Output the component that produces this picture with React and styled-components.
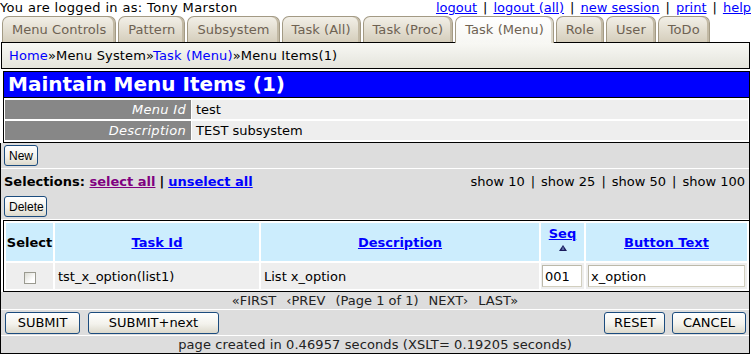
import React from 'react'
import styled, {createGlobalStyle, css} from 'styled-components'

const GlobalStyle = createGlobalStyle`
  body {
    margin: 0;
    background: #fff;
    font-family: "DejaVu Sans", Verdana, sans-serif;
    font-size: 13px;
    color: #000;
  }
`

const Page = styled.div`
  width: 752px;
  overflow: hidden;
`

const TopLine = styled.div`
  display: flex;
  justify-content: space-between;
  height: 16px;
  line-height: 15px;
  white-space: nowrap;
`

const Who = styled.span`
  letter-spacing: 0.35px;
`

const LinkRow = styled.div`
  display: flex;
  margin-right: 1px;
  a { color: #0000ff; text-decoration: underline; }
`

const Sep = styled.span`
  margin: 0 ${p => p.gap || 6}px;
  font-weight: ${p => p.bold ? 'bold' : 'normal'};
`

const TabBar = styled.ul`
  display: flex;
  align-items: flex-start;
  gap: 2px;
  height: 26px;
  margin: 0;
  padding: 0 0 0 2px;
  list-style: none;
  position: relative;
  z-index: 1;
`

const Tab = styled.li`
  box-sizing: border-box;
  height: 26px;
  padding: 0 9px;
  line-height: 25px;
  letter-spacing: 0.05px;
  border: 1px solid #a39a84;
  border-bottom: none;
  border-radius: 7px 7px 0 0;
  background: linear-gradient(#f2efe7, #d5cebc);
  box-shadow: inset -2px 0 0 #c2b9a4;
  color: #6e6253;
  white-space: nowrap;
  ${p => p.active && css`
    height: 27px;
    margin-bottom: -1px;
    background: linear-gradient(#ffffff, #f7f7f3);
    box-shadow: inset -2px 0 0 #dcd8cc;
  `}
`

const Crumbs = styled.div`
  box-sizing: border-box;
  width: 749px;
  height: 27px;
  margin-left: 1px;
  padding-left: 7px;
  line-height: 25px;
  letter-spacing: 0.15px;
  border: 1px solid #000;
  background: linear-gradient(#f8f8f4, #e4e4dc);
  white-space: nowrap;
  a { color: #0000ff; text-decoration: none; }
`

const MainBox = styled.div`
  box-sizing: border-box;
  width: 747px;
  margin: 2px 0 0 3px;
  border: 1px solid #000;
`

const Title = styled.h1`
  margin: 0;
  height: 25px;
  padding-left: 4px;
  line-height: 25px;
  background: #0000ff;
  color: #fff;
  font-size: 20px;
  font-weight: bold;
  border-bottom: 1px solid #000;
  white-space: nowrap;
`

const FieldTable = styled.table`
  width: 100%;
  border-spacing: 1px 2px;
  table-layout: fixed;
`

const Label = styled.td`
  box-sizing: border-box;
  width: 186px;
  height: 19px;
  padding: 0 5px 0 0;
  background: #878787;
  color: #fff;
  font-style: italic;
  letter-spacing: 0.3px;
  text-align: right;
`

const Value = styled.td`
  height: 19px;
  padding: 0 4px;
  background: #eeeeee;
`

const Lower = styled.div`
  box-sizing: border-box;
  width: 750px;
  border: 1px solid #000;
  border-top: none;
`

const Bar = styled.div`
  background: #dddddd;
  border-bottom: ${p => p.last ? 'none' : '1px solid #fff'};
  padding: ${p => p.pad || '0 3px'};
  height: ${p => p.h}px;
  box-sizing: content-box;
`

const SelectLine = styled.div`
  display: flex;
  justify-content: space-between;
  line-height: 16px;
  white-space: nowrap;
  margin-bottom: 6px;
`

const Strong = styled.span`
  font-weight: bold;
`

const SelLink = styled.a`
  color: ${p => p.visited ? '#800080' : '#0000ff'};
  text-decoration: underline;
`

const ShowRow = styled.div`
  display: flex;
  padding-right: 1px;
`

const Button = styled.button`
  box-sizing: border-box;
  height: ${p => p.small ? 21 : 22}px;
  width: ${p => p.w ? `${p.w}px` : 'auto'};
  padding: 0 ${p => p.small ? 4 : 9}px;
  font-family: ${p => p.small ? '"Liberation Sans", Arial, sans-serif' : '"DejaVu Sans", Verdana, sans-serif'};
  font-size: ${p => p.small ? 12 : 13}px;
  color: #000;
  border: 1px solid #1c4c7e;
  border-radius: 3px;
  background: linear-gradient(#ffffff, #f3f2ec 55%, #dcd9cc);
  cursor: pointer;
`

const DataWrap = styled.div`
  margin-left: 2px;
  border-top: 1px solid #000;
  border-left: 1px solid #000;
  border-bottom: 1px solid #000;
`

const DataTable = styled.table`
  width: 100%;
  border-spacing: 2px;
  table-layout: fixed;
`

const Th = styled.th`
  height: 38px;
  padding: 0;
  background: #ccedfd;
  font-weight: bold;
  text-align: center;
  vertical-align: middle;
  a { color: #0000ff; text-decoration: underline; }
`

const SortCell = styled.div`
  display: flex;
  flex-direction: column;
  align-items: center;
  gap: 4px;
  margin-top: -8px;
`

const Td = styled.td`
  height: 26px;
  padding: 0 ${p => p.pad ?? 3}px;
  background: #eeeeee;
  text-align: ${p => p.center ? 'center' : 'left'};
  white-space: nowrap;
`

const Check = styled.span`
  display: inline-block;
  box-sizing: border-box;
  width: 12px;
  height: 12px;
  margin-top: 4px;
  border: 1px solid #9a9a90;
  background: linear-gradient(135deg, #dcdcd4, #ffffff 70%);
  vertical-align: middle;
`

const Input = styled.input`
  box-sizing: border-box;
  width: ${p => p.w}px;
  height: 22px;
  padding: 0 2px;
  font-family: "DejaVu Sans", Verdana, sans-serif;
  font-size: 13px;
  border: 1px solid #d2cfbf;
  border-top-color: #bcb9aa;
  border-left-color: #bcb9aa;
  background: #fff;
`

const Pager = styled.div`
  display: flex;
  justify-content: center;
  gap: 10px;
  line-height: 17px;
  color: #222;
  white-space: nowrap;
`

const ButtonRow = styled.div`
  display: flex;
  justify-content: space-between;
  align-items: center;
  height: 100%;
`

const Group = styled.div`
  display: flex;
  gap: ${p => p.gap}px;
`

const Footer = styled.div`
  text-align: center;
  line-height: 17px;
  letter-spacing: 0.1px;
  color: #222;
  white-space: nowrap;
`

const tabs = ['Menu Controls', 'Pattern', 'Subsystem', 'Task (All)', 'Task (Proc)', 'Task (Menu)', 'Role', 'User', 'ToDo']
const topLinks = ['logout', 'logout (all)', 'new session', 'print', 'help']
const shows = [10, 25, 50, 100]

function SortArrow() {
  return (
    <svg width="8" height="6" viewBox="0 0 8 6">
      <polygon points="4,0 8,6 0,6" fill="#1a1a5c" />
      <polygon points="4,1 5.5,5 2.5,5" fill="#5a6aa8" />
    </svg>
  )
}

export default function App() {
  return (
    <Page>
      <GlobalStyle />
      <TopLine>
        <Who>You are logged in as: Tony Marston</Who>
        <LinkRow>
          {topLinks.map((l, i) => (
            <React.Fragment key={l}>
              {i > 0 && <Sep>|</Sep>}
              <a href="#">{l}</a>
            </React.Fragment>
          ))}
        </LinkRow>
      </TopLine>

      <TabBar>
        {tabs.map(t => <Tab key={t} active={t === 'Task (Menu)'}>{t}</Tab>)}
      </TabBar>

      <Crumbs>
        <a href="#">Home</a>»Menu System»<a href="#">Task (Menu)</a>»Menu Items(1)
      </Crumbs>

      <MainBox>
        <Title>Maintain Menu Items (1)</Title>
        <FieldTable>
          <tbody>
            <tr><Label>Menu Id</Label><Value>test</Value></tr>
            <tr><Label>Description</Label><Value>TEST subsystem</Value></tr>
          </tbody>
        </FieldTable>
      </MainBox>

      <Lower>
        <Bar h={20} pad="2px 3px 3px">
          <Button small>New</Button>
        </Bar>
        <Bar h={44} pad="5px 3px 1px">
          <SelectLine>
            <Strong>
              Selections: <SelLink href="#" visited>select all</SelLink>
              <Sep gap={4} bold>|</Sep>
              <SelLink href="#">unselect all</SelLink>
            </Strong>
            <ShowRow>
              {shows.map((n, i) => (
                <React.Fragment key={n}>
                  {i > 0 && <Sep>|</Sep>}
                  <span>show {n}</span>
                </React.Fragment>
              ))}
            </ShowRow>
          </SelectLine>
          <Button small w={43}>Delete</Button>
        </Bar>

        <DataWrap>
          <DataTable>
            <colgroup>
              <col style={{width: 47}} />
              <col style={{width: 204}} />
              <col style={{width: 278}} />
              <col style={{width: 43}} />
              <col />
            </colgroup>
            <thead>
              <tr>
                <Th>Select</Th>
                <Th><a href="#">Task Id</a></Th>
                <Th><a href="#">Description</a></Th>
                <Th>
                  <SortCell>
                    <a href="#">Seq</a>
                    <SortArrow />
                  </SortCell>
                </Th>
                <Th><a href="#">Button Text</a></Th>
              </tr>
            </thead>
            <tbody>
              <tr>
                <Td center><Check /></Td>
                <Td>tst_x_option(list1)</Td>
                <Td>List x_option</Td>
                <Td pad={1}><Input w={40} defaultValue="001" /></Td>
                <Td pad={2}><Input w={157} defaultValue="x_option" /></Td>
              </tr>
            </tbody>
          </DataTable>
        </DataWrap>

        <Bar h={17} pad="0">
          <Pager>
            <span>«FIRST</span>
            <span>‹PREV</span>
            <span>(Page 1 of 1)</span>
            <span>NEXT›</span>
            <span>LAST»</span>
          </Pager>
        </Bar>
        <Bar h={25} pad="0 3px 0 4px">
          <ButtonRow>
            <Group gap={8}>
              <Button w={75}>SUBMIT</Button>
              <Button w={131}>SUBMIT+next</Button>
            </Group>
            <Group gap={7}>
              <Button w={61}>RESET</Button>
              <Button w={74}>CANCEL</Button>
            </Group>
          </ButtonRow>
        </Bar>
        <Bar h={17} pad="0" last>
          <Footer>page created in 0.46957 seconds (XSLT= 0.19205 seconds)</Footer>
        </Bar>
      </Lower>
    </Page>
  )
}
